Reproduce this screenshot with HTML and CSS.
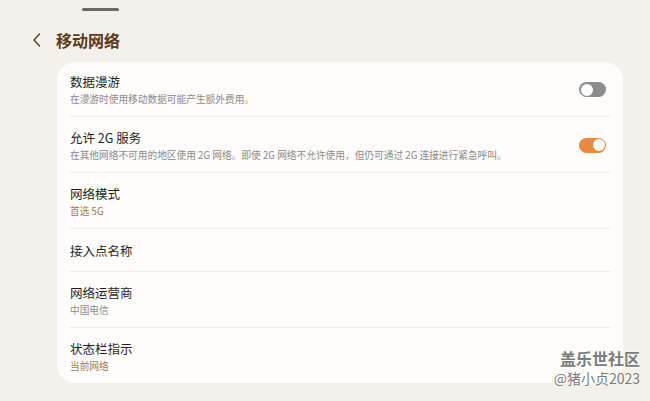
FILE: index.html
```html
<!DOCTYPE html>
<html lang="zh-CN">
<head>
  <meta charset="UTF-8">
  <meta name="viewport" content="width=device-width, initial-scale=1.0">
  <title>移动网络</title>
  <link rel="stylesheet" href="styles.css">
</head>
<body>
  <div class="page">
    <div class="handle"></div>

    <!-- Header -->
    <div class="header">
      <svg class="back" width="10" height="14" viewBox="0 0 10 14">
        <path d="M7.5 1 L2 7 L7.5 13" fill="none" stroke="#5a3a20" stroke-width="1.4" stroke-linecap="round" stroke-linejoin="round"/>
      </svg>
      <div class="header-title">移动网络</div>
    </div>

    <!-- Settings card -->
    <div class="card">
      <div class="row first">
        <div class="row-text">
          <div class="row-title">数据漫游</div>
          <div class="row-sub">在漫游时使用移动数据可能产生额外费用。</div>
        </div>
        <div class="toggle"></div>
      </div>
      <div class="row">
        <div class="row-text">
          <div class="row-title">允许 2G 服务</div>
          <div class="row-sub">在其他网络不可用的地区使用 2G 网络。即使 2G 网络不允许使用，但仍可通过 2G 连接进行紧急呼叫。</div>
        </div>
        <div class="toggle on"></div>
      </div>
      <div class="row">
        <div class="row-text">
          <div class="row-title">网络模式</div>
          <div class="row-sub accent">首选 5G</div>
        </div>
      </div>
      <div class="row single">
        <div class="row-text">
          <div class="row-title">接入点名称</div>
        </div>
      </div>
      <div class="row">
        <div class="row-text">
          <div class="row-title">网络运营商</div>
          <div class="row-sub">中国电信</div>
        </div>
      </div>
      <div class="row last">
        <div class="row-text">
          <div class="row-title">状态栏指示</div>
          <div class="row-sub accent">当前网络</div>
        </div>
      </div>
    </div>

    <div class="watermark">
      <div class="wm-main">盖乐世社区</div>
      <div class="wm-user">@猪小贞2023</div>
    </div>
  </div>
</body>
</html>
```

FILE: styles.css
```css
body {
  margin: 0;
  padding: 0;
  background-color: #f4f0ec;
  font-family: "Noto Sans CJK SC", "Noto Sans", sans-serif;
  color: #1f1f1f;
}

.page {
  position: relative;
  width: 650px;
  height: 401px;
  overflow: hidden;
}

.handle {
  width: 37px;
  height: 3px;
  margin: 8px 0 0 82px;
  background: #6c6a68;
  border-radius: 2px;
}

.header {
  display: flex;
  align-items: center;
  height: 22px;
  margin-top: 18px;
  padding-left: 32px;
}

.back {
  display: block;
}

.header-title {
  margin-left: 14px;
  font-size: 16px;
  font-weight: 700;
  color: #5a3a20;
}

.card {
  width: 566px;
  margin: 11px 0 0 57px;
  background: #fefdfc;
  border-radius: 18px;
  box-sizing: border-box;
  padding: 0 13px;
}

.row {
  display: flex;
  align-items: center;
  height: 56px;
  padding-top: 1px;
  border-bottom: 1px solid #eeebe8;
  box-sizing: border-box;
}

.row.first {
  height: 55px;
}

.row.single {
  height: 43px;
}

.row.last {
  height: 55px;
  border-bottom: none;
}

.row-text {
  flex-grow: 1;
  display: flex;
  flex-direction: column;
}

.row-title {
  font-size: 12.5px;
  line-height: 17px;
  color: #1f1f1f;
}

.row-sub {
  margin-top: 2px;
  font-size: 9.7px;
  line-height: 14px;
  color: #8c8a88;
}

.row-sub.accent {
  color: #a27a4c;
}

.toggle {
  position: relative;
  width: 27px;
  height: 15px;
  margin-right: 4px;
  border-radius: 8px;
  background: #8d8c8c;
}

.toggle::after {
  content: "";
  position: absolute;
  top: 1.5px;
  left: 1.5px;
  width: 12px;
  height: 12px;
  border-radius: 50%;
  background: #fff;
}

.toggle.on {
  background: #e8893e;
}

.toggle.on::after {
  left: auto;
  right: 1.5px;
  background: #fffaf4;
}

.watermark {
  position: absolute;
  right: 10px;
  bottom: 15px;
  text-align: right;
  color: #7b7b7b;
  text-shadow: 0 0 2px #fff, 0 0 2px #fff;
}

.wm-main {
  font-size: 16px;
  line-height: 20px;
  font-weight: 700;
}

.wm-user {
  margin-top: 3px;
  font-size: 14px;
  line-height: 15px;
}
```
